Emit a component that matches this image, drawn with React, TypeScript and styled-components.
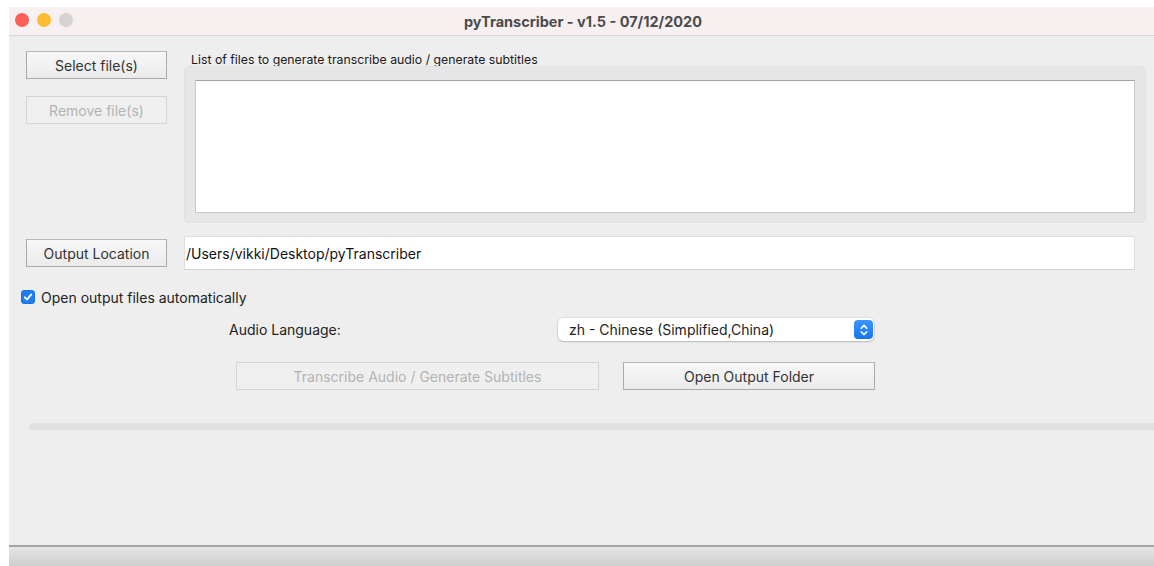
import React, { useState } from 'react';
import styled, { createGlobalStyle, css } from 'styled-components';

const GlobalStyle = createGlobalStyle`
  html, body {
    margin: 0;
    padding: 0;
    background: #ffffff;
    overflow: hidden;
  }
  body {
    font-family: Inter, 'Liberation Sans', Arial, sans-serif;
    color: #222;
  }
`;

const App = () => {
  const [openAuto, setOpenAuto] = useState(true);

  return (
    <>
      <GlobalStyle />
      <Window>
        <TitleBar>
          <Lights>
            <Light color="#fe5f57" />
            <Light color="#febc2e" />
            <Light color="#d6d2d2" />
          </Lights>
          <Title>pyTranscriber - v1.5 - 07/12/2020</Title>
        </TitleBar>

        <Content>
          <FilesRow>
            <SideButtons>
              <Button>Select file(s)</Button>
              <Button disabled>Remove file(s)</Button>
            </SideButtons>
            <FilesColumn>
              <SmallLabel>List of files to generate transcribe audio / generate subtitles</SmallLabel>
              <GroupBox>
                <FileList />
              </GroupBox>
            </FilesColumn>
          </FilesRow>

          <OutputRow>
            <Button>Output Location</Button>
            <PathField value="/Users/vikki/Desktop/pyTranscriber" readOnly />
          </OutputRow>

          <CheckRow onClick={() => setOpenAuto(!openAuto)}>
            <CheckBox checked={openAuto}>
              {openAuto && (
                <svg width="10" height="10" viewBox="0 0 10 10">
                  <path d="M1.8 5.3 L4 7.6 L8.3 2.4" fill="none" stroke="#fff" strokeWidth="1.8" strokeLinecap="round" strokeLinejoin="round" />
                </svg>
              )}
            </CheckBox>
            <span>Open output files automatically</span>
          </CheckRow>

          <LanguageRow>
            <LanguageLabel>Audio Language:</LanguageLabel>
            <Select>
              <span>zh - Chinese (Simplified,China)</span>
              <Stepper>
                <svg width="10" height="14" viewBox="0 0 10 14">
                  <path d="M2.2 5.2 L5 2.4 L7.8 5.2 M2.2 8.8 L5 11.6 L7.8 8.8" fill="none" stroke="#fff" strokeWidth="1.5" strokeLinecap="round" strokeLinejoin="round" />
                </svg>
              </Stepper>
            </Select>
          </LanguageRow>

          <ActionRow>
            <Button disabled width={363}>Transcribe Audio / Generate Subtitles</Button>
            <Button width={252}>Open Output Folder</Button>
          </ActionRow>

          <Progress />
        </Content>

        <StatusBar />
      </Window>
    </>
  );
};

const Window = styled.div`
  height: 100vh;
  box-sizing: border-box;
  margin-left: 9px;
  padding-top: 7px;
  display: flex;
  flex-direction: column;
`;

const TitleBar = styled.div`
  position: relative;
  height: 28px;
  flex-shrink: 0;
  background: #f6f0f0;
  border-bottom: 1px solid #d9d6d6;
  display: flex;
  align-items: center;
  justify-content: center;
`;

const Lights = styled.div`
  position: absolute;
  left: 6px;
  top: 6px;
  display: flex;
  gap: 8px;
`;

const Light = styled.span<{ color: string }>`
  width: 14px;
  height: 14px;
  border-radius: 50%;
  background: ${(p) => p.color};
`;

const Title = styled.div`
  font-weight: 700;
  font-size: 14.5px;
  color: #4b4b4b;
  margin-left: 3px;
`;

const Content = styled.div`
  flex: 1;
  background: #eeeeee;
  padding: 15px 8px 0 17px;
  display: flex;
  flex-direction: column;
  font-size: 14px;
`;

const FilesRow = styled.div`
  display: flex;
  gap: 17px;
`;

const SideButtons = styled.div`
  display: flex;
  flex-direction: column;
  gap: 17px;
  width: 141px;
`;

const Button = styled.button<{ width?: number }>`
  box-sizing: border-box;
  height: 28px;
  width: ${(p) => (p.width ? `${p.width}px` : '141px')};
  flex-shrink: 0;
  padding: 0;
  font-family: inherit;
  font-size: 14px;
  color: #333;
  background: linear-gradient(#f7f7f7, #ebebeb);
  border: 1px solid #aaaaaa;
  border-top-color: #b8b8b8;
  border-radius: 0;
  ${(p) =>
    p.disabled &&
    css`
      color: #b3b3b3;
      background: #efefef;
      border: 1px solid #d4d4d4;
    `}
`;

const FilesColumn = styled.div`
  flex: 1;
  display: flex;
  flex-direction: column;
`;

const SmallLabel = styled.div`
  box-sizing: border-box;
  font-size: 12.3px;
  line-height: 13px;
  height: 15px;
  padding: 2px 0 0 7px;
  color: #1a1a1a;
`;

const GroupBox = styled.div`
  background: #e6e6e6;
  border: 1px solid #e1e1e1;
  border-radius: 5px;
  padding: 13px 10px 9px 10px;
`;

const FileList = styled.div`
  box-sizing: border-box;
  height: 133px;
  background: #ffffff;
  border: 1px solid #c9c9c9;
  border-top-color: #a4a4a4;
`;

const OutputRow = styled.div`
  display: flex;
  align-items: center;
  gap: 17px;
  margin-top: 13px;
  margin-right: 11px;
`;

const PathField = styled.input`
  flex: 1;
  box-sizing: border-box;
  height: 34px;
  border: 1px solid #dedede;
  border-bottom-color: #d2d2d2;
  background: #ffffff;
  padding: 0 1px;
  font-family: inherit;
  font-size: 14px;
  color: #111;
  outline: none;
`;

const CheckRow = styled.label`
  display: flex;
  align-items: center;
  gap: 6px;
  height: 14px;
  margin: 20px 0 0 -5px;
  color: #222;
  cursor: default;
`;

const CheckBox = styled.span<{ checked: boolean }>`
  width: 14px;
  height: 14px;
  box-sizing: border-box;
  border-radius: 3px;
  display: flex;
  align-items: center;
  justify-content: center;
  background: ${(p) => (p.checked ? '#1c7ff6' : '#fff')};
  border: 1px solid ${(p) => (p.checked ? '#1a74e0' : '#b5b5b5')};
`;

const LanguageRow = styled.div`
  display: flex;
  align-items: center;
  height: 23px;
  margin-top: 14px;
  padding-left: 203px;
`;

const LanguageLabel = styled.div`
  width: 329px;
  color: #222;
`;

const Select = styled.div`
  box-sizing: border-box;
  width: 316px;
  height: 23px;
  background: #ffffff;
  border-radius: 5px;
  box-shadow: 0 0 0 0.5px rgba(0, 0, 0, 0.12), 0 1px 2px rgba(0, 0, 0, 0.18);
  display: flex;
  align-items: center;
  justify-content: space-between;
  padding: 0 1px 0 11px;
  color: #222;
`;

const Stepper = styled.span`
  width: 19px;
  height: 19px;
  border-radius: 4px;
  background: linear-gradient(#3b95ff, #1577f0);
  display: flex;
  align-items: center;
  justify-content: center;
`;

const ActionRow = styled.div`
  display: flex;
  gap: 24px;
  margin-top: 21px;
  padding-left: 210px;
`;

const Progress = styled.div`
  height: 7px;
  margin: 33px -20px 0 3px;
  background: #e1e1e1;
  border-radius: 4px;
`;

const StatusBar = styled.div`
  height: 19px;
  flex-shrink: 0;
  border-top: 2px solid #a3a3a3;
  background: linear-gradient(#e6e6e6, #cdcdcd);
`;

export default App;
